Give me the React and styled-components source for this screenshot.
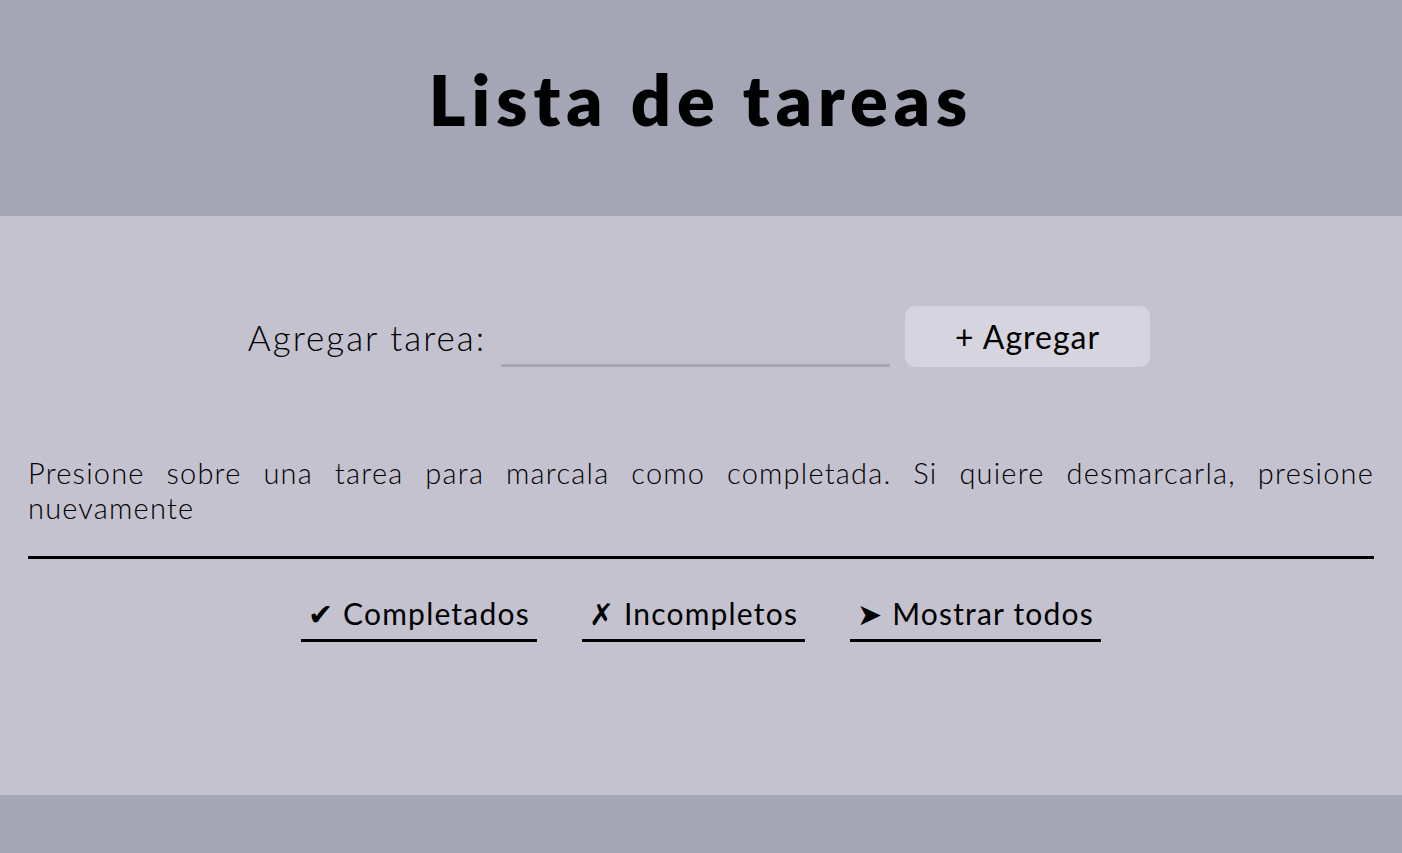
import React, { useState } from 'react';
import styled, { createGlobalStyle } from 'styled-components';

const GlobalStyle = createGlobalStyle`
  body {
    margin: 0;
    font-family: Lato, "Open Sans", sans-serif;
    background: #a4a6b5;
    color: #000;
  }
`;

const Header = styled.header`
  height: 216px;
  display: flex;
  align-items: center;
  justify-content: center;
  background: #a4a6b5;
`;

const Title = styled.h1`
  margin: 0 0 18px;
  font-size: 70px;
  font-weight: 800;
  letter-spacing: 6px;
`;

const Main = styled.main`
  background: #c4c2cf;
  height: 579px;
  padding: 90px 28px 0;
  box-sizing: border-box;
`;

const Form = styled.form`
  display: flex;
  justify-content: center;
  align-items: center;
  gap: 15px;
  padding-right: 4px;
`;

const Label = styled.label`
  font-size: 35px;
  font-weight: 300;
  letter-spacing: 2px;
`;

const Input = styled.input`
  width: 389px;
  height: 54px;
  box-sizing: border-box;
  margin-top: 6px;
  border: none;
  border-bottom: 3px solid #a4a6b5;
  background: transparent;
  font-size: 28px;
  font-family: inherit;
  outline: none;
`;

const AddButton = styled.button`
  width: 245px;
  height: 61px;
  border: none;
  border-radius: 10px;
  background: #d6d4de;
  font-family: inherit;
  font-size: 32px;
  font-weight: 400;
  letter-spacing: 1px;
  color: #000;
`;

const Hint = styled.p`
  margin: 88px 0 0;
  font-size: 29px;
  font-weight: 300;
  letter-spacing: 1.2px;
  line-height: 35px;
  text-align: justify;
  padding-bottom: 31px;
  border-bottom: 3px solid #000;
`;

const Filters = styled.div`
  display: flex;
  justify-content: center;
  gap: 45px;
  margin-top: 36px;
`;

const Filter = styled.button`
  border: none;
  border-bottom: 3px solid #000;
  background: transparent;
  padding: 0 7px 7px;
  font-family: inherit;
  font-size: 30px;
  font-weight: 400;
  letter-spacing: 1.2px;
  color: #000;
`;

export default function App() {
  const [task, setTask] = useState('');
  return (
    <>
      <GlobalStyle />
      <Header>
        <Title>Lista de tareas</Title>
      </Header>
      <Main>
        <Form onSubmit={(e) => e.preventDefault()}>
          <Label htmlFor="tarea">Agregar tarea:</Label>
          <Input id="tarea" value={task} onChange={(e) => setTask(e.target.value)} />
          <AddButton type="submit">+ Agregar</AddButton>
        </Form>
        <Hint>
          Presione sobre una tarea para marcala como completada. Si quiere desmarcarla, presione nuevamente
        </Hint>
        <Filters>
          <Filter>✔ Completados</Filter>
          <Filter>✗ Incompletos</Filter>
          <Filter>➤ Mostrar todos</Filter>
        </Filters>
      </Main>
    </>
  );
}
